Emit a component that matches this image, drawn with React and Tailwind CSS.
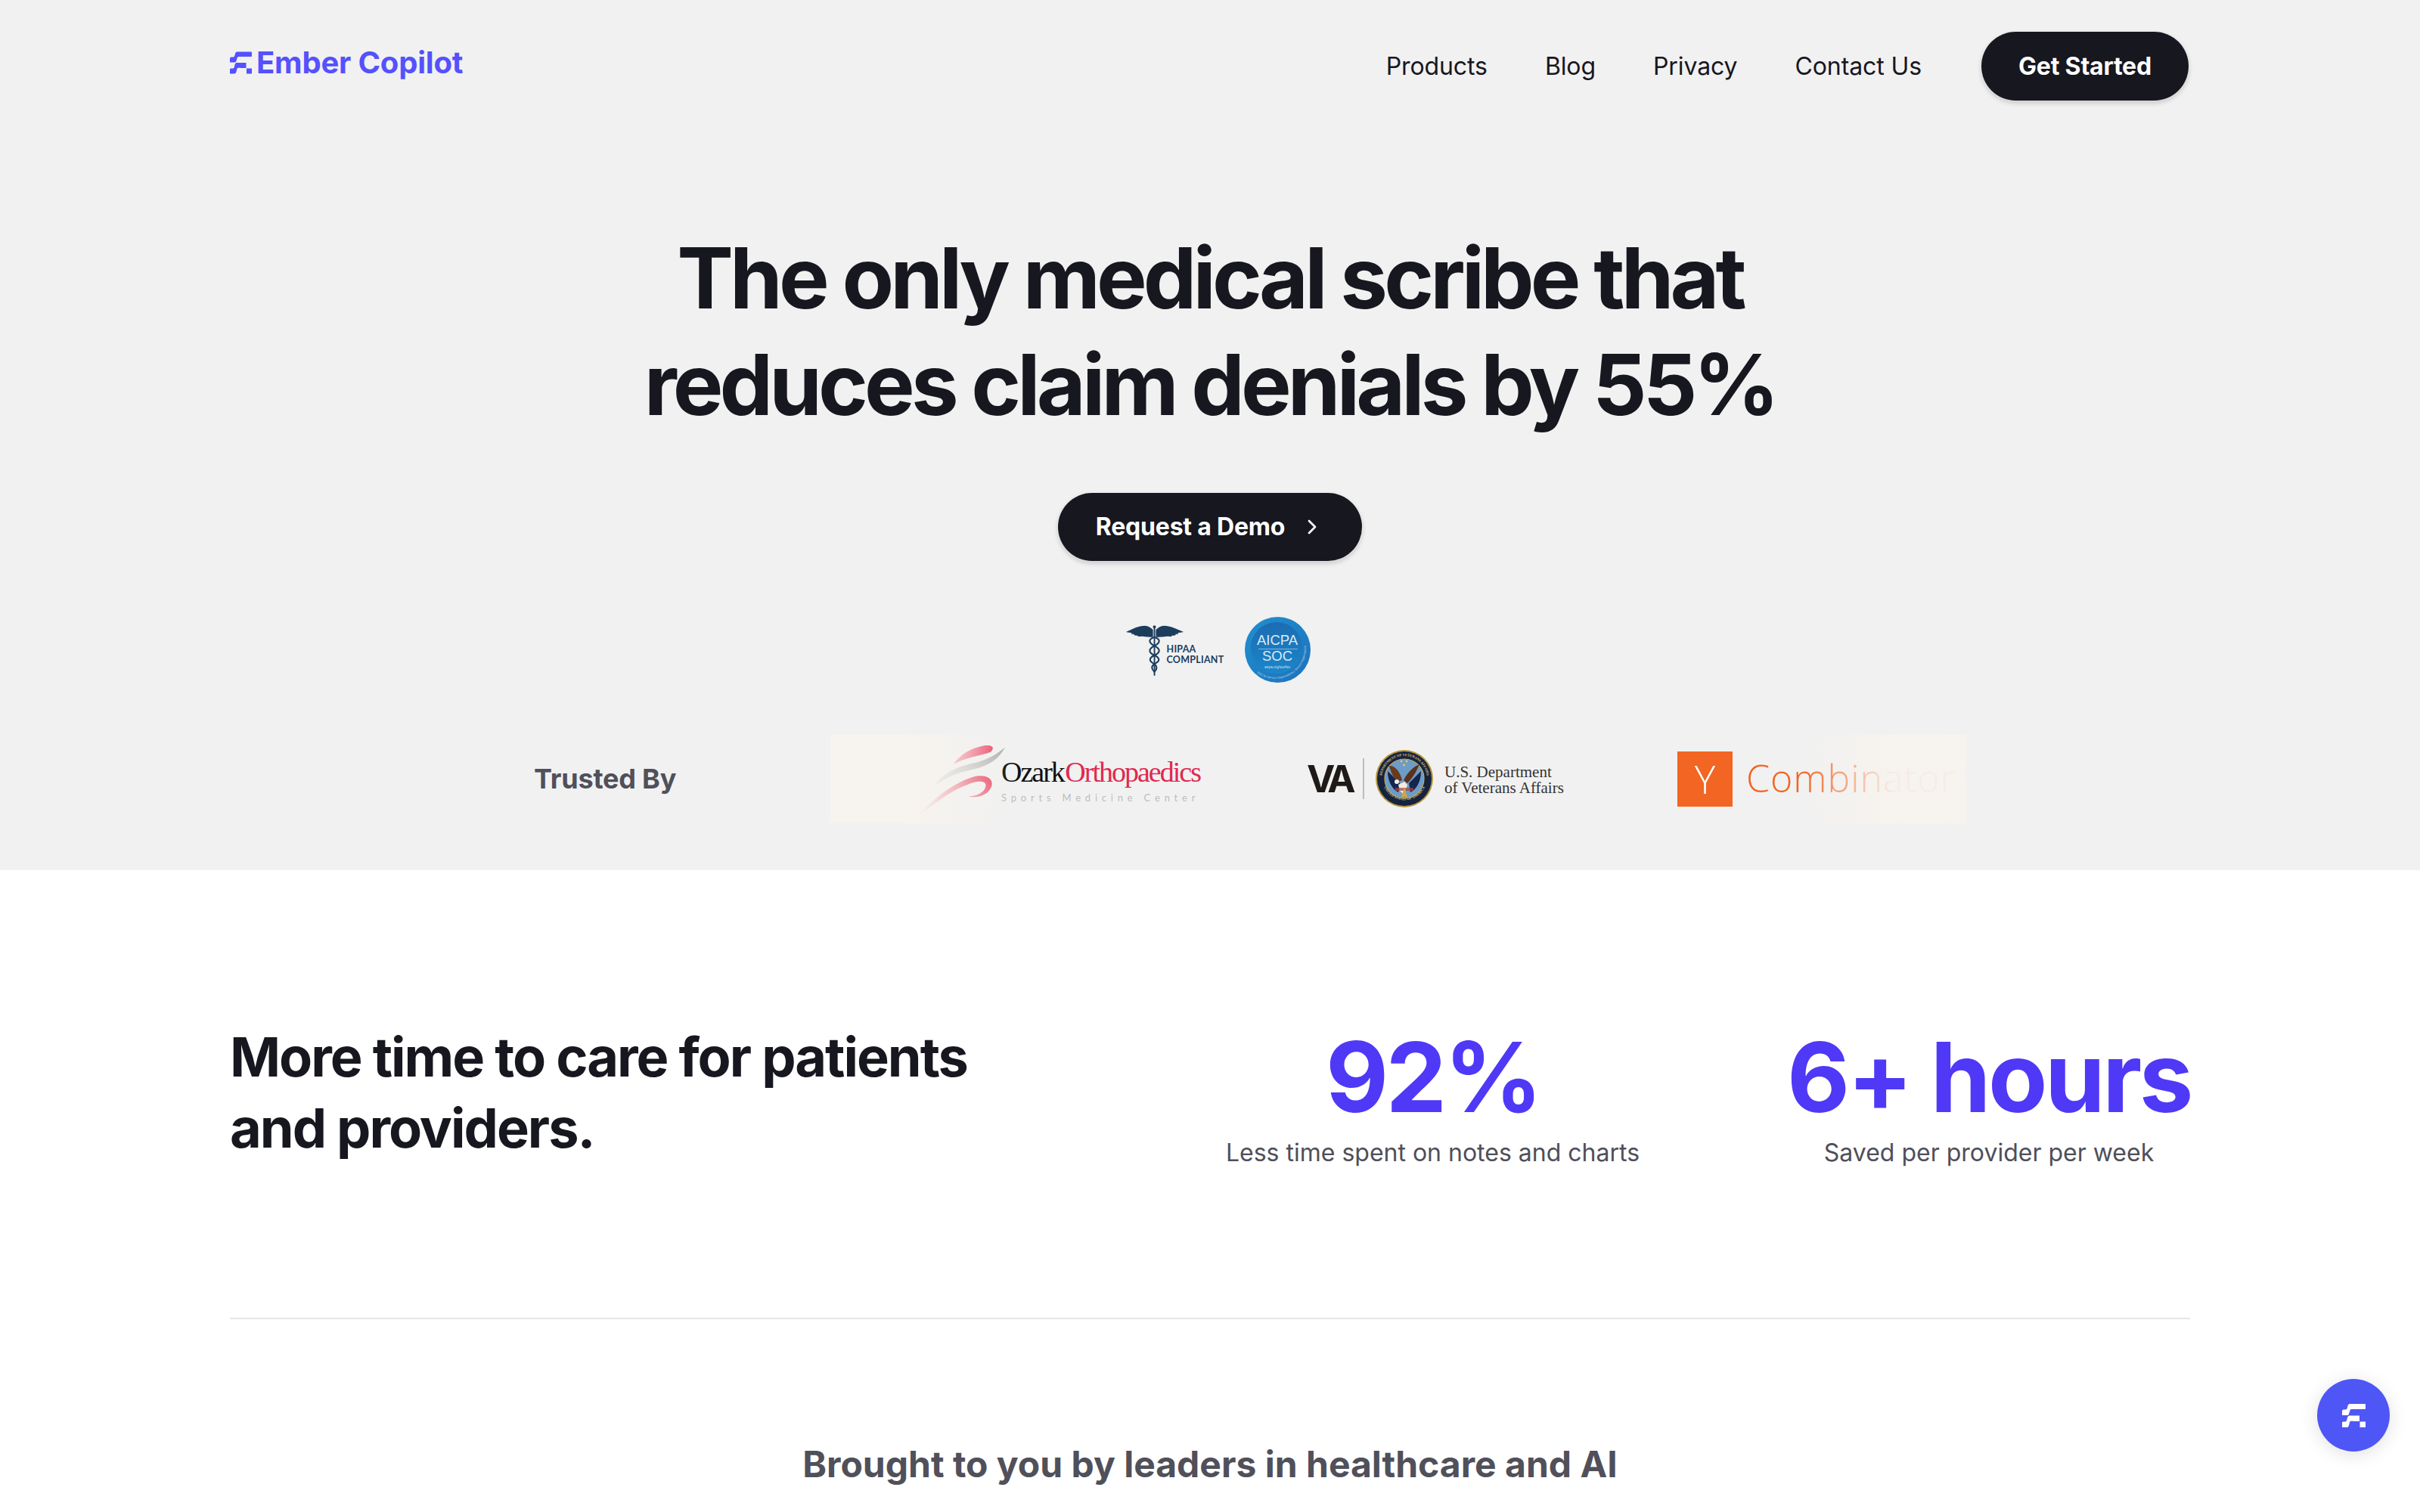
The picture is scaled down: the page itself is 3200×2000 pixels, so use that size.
import { ChevronRight } from "lucide-react";

const INTER = { fontFamily: "Inter, sans-serif" };

function EmberMark({ className }) {
  return (
    <svg viewBox="0 0 31 31" className={className} fill="currentColor">
      <path d="M10 0H30a1 1 0 0 1 1 1V6a1 1 0 0 1-1 1H12.500C11 7 10.500 8 9.800 10.500C9.300 13 8.500 15 7 15H0V9.800C0 8.500 .8 7.500 2 7.500H4.500C6 7.500 6.500 6.500 7 4.500C7.500 2 8.300 0 10 0Z" />
      <path d="M9.500 15.500H23V23H15V22.800H11.800C10.500 22.800 10 24 9.600 26C9 29 8.300 31 6.500 31H0V25C0 24 .8 23.500 1.800 23.500H4C5.500 23.500 6 22.500 6.400 20.500C7 17.500 7.800 15.500 9.500 15.500Z" />
      <rect x="23.500" y="23.500" width="7.500" height="7.500" />
    </svg>
  );
}

function NavBar() {
  return (
    <header className="flex items-center justify-between pt-[42px]">
      <a className="flex items-center gap-[6px] -mt-[10px] text-[#5551ff]">
        <EmberMark className="w-[29px] h-[30px]" />
        <span className="text-[40px] leading-[48px] font-bold tracking-[-0.2px]">Ember Copilot</span>
      </a>
      <nav className="flex items-center gap-[76px] mr-[2px] text-[32px] tracking-[-0.1px] text-[#17171f]">
        <a>Products</a>
        <a>Blog</a>
        <a>Privacy</a>
        <a className="mr-[3px]">Contact Us</a>
        <button className="h-[91px] w-[274px] rounded-full bg-[#17171f] text-white font-bold tracking-[-0.2px] shadow-[0_3px_6px_rgba(0,0,0,0.2),0_1px_0_1px_rgba(255,255,255,0.8)]">
          Get Started
        </button>
      </nav>
    </header>
  );
}

function Caduceus() {
  return (
    <svg viewBox="0 0 80 74" className="w-[80px] h-[74px] text-[#1c3d5c]" fill="currentColor">
      <path d="M37 9C30 1 22 3 13 6C8 8 4 10 0 12C4 13 6 13 8 13C6 15 8 15 11 15C10 17 13 17 16 17C16 19 20 18 23 18C28 19 33 19 37 19Z" />
      <path d="M41 9C48 1 56 3 65 6C70 8 75 10 79 12C75 13 73 13 71 13C73 15 71 15 68 15C69 17 66 17 63 17C63 19 59 18 56 18C51 19 46 19 41 19Z" />
      <circle cx="39" cy="5" r="2" />
      <rect x="38" y="6" width="2" height="66" />
      <path d="M39 19C48 22 47 27 39 31C31 35 30 40 39 44C47 48 47 52 39 56C34 59 35 63 39 67M39 19C30 22 31 27 39 31C47 35 48 40 39 44C31 48 31 52 39 56C43 59 43 63 39 67" fill="none" stroke="currentColor" strokeWidth="2.200" />
    </svg>
  );
}

function AicpaBadge() {
  return (
    <svg viewBox="0 0 87 87" className="w-[87px] h-[87px] shrink-0" fontFamily="Liberation Sans, sans-serif">
      <defs>
        <linearGradient id="aicpaRim" x1="0" x2="1" y1="0" y2="1">
          <stop offset="0" stopColor="#1f8fd0" />
          <stop offset="1" stopColor="#1f72bb" />
        </linearGradient>
        <linearGradient id="aicpaCore" x1="0" x2="0" y1="0" y2="1">
          <stop offset="0" stopColor="#1c6cb2" />
          <stop offset="1" stopColor="#1b86c9" />
        </linearGradient>
        <path id="aicpaRing" d="M16 74a41 41 0 0 0 65-36" />
      </defs>
      <circle cx="43.500" cy="43.500" r="43.500" fill="url(#aicpaRim)" />
      <circle cx="42" cy="41" r="34" fill="url(#aicpaCore)" />
      <text x="43" y="37" textAnchor="middle" fontSize="18.500" fill="#dbeaf6">AICPA</text>
      <rect x="18" y="42" width="52" height="1" fill="#7fb4dc" />
      <text x="43" y="58" textAnchor="middle" fontSize="18.500" fill="#dbeaf6">SOC</text>
      <text x="43" y="68" textAnchor="middle" fontSize="4.500" fill="#cfe3f3">aicpa.org/soc4so</text>
      <text fontSize="3.800" fill="#bcd9ef">
        <textPath href="#aicpaRing">SOC for Service Organizations | Service Organizations</textPath>
      </text>
    </svg>
  );
}

function Compliance() {
  return (
    <div className="flex items-center justify-center mt-[74px] ml-[26px]">
      <div className="flex items-start w-[130px] ml-[-5px] h-[74px]">
        <Caduceus />
        <div className="ml-[-23px] mt-[29px] text-[12.5px] leading-[14px] font-bold tracking-[0.25px] text-[#1c3d5c]" style={{ fontFamily: "Lato, sans-serif" }}>
          <div>HIPAA</div>
          <div>COMPLIANT</div>
        </div>
      </div>
      <div className="ml-[27px]">
        <AicpaBadge />
      </div>
    </div>
  );
}

function OzarkLogo() {
  return (
    <div className="flex items-start w-[512px] h-[118px] pl-[116px] shrink-0">
      <svg viewBox="0 0 108 90" className="w-[115px] h-[96px] mt-[12px] shrink-0">
        <defs>
          <linearGradient id="ozTop" x1="0" x2="1" y1="0" y2="0">
            <stop offset="0" stopColor="#f29bad" />
            <stop offset="1" stopColor="#e9415f" />
          </linearGradient>
          <linearGradient id="ozBottom" x1="0" x2="1" y1="1" y2="0">
            <stop offset="0" stopColor="#f4d6da" />
            <stop offset="1" stopColor="#e9415f" />
          </linearGradient>
          <linearGradient id="ozGray" x1="0" x2="1" y1="1" y2="0">
            <stop offset="0" stopColor="#dededc" />
            <stop offset="1" stopColor="#adadab" />
          </linearGradient>
        </defs>
        <path d="M44 26C52 14 66 6 82 3C92 2 96 5 90 11C78 16 60 17 44 26Z" fill="url(#ozTop)" />
        <path d="M20 54C30 36 52 28 72 24C86 20 96 15 108 5C100 20 88 28 66 33C46 37 32 44 20 54Z" fill="url(#ozGray)" />
        <path d="M0 90C18 70 42 50 68 42C86 37 96 46 90 56C86 64 74 69 62 66C74 66 84 60 84 52C84 46 72 46 60 52C38 60 18 78 0 90Z" fill="url(#ozBottom)" />
      </svg>
      <div className="ml-[-5px] pt-[29px]">
        <div className="text-[38px] leading-[42px] tracking-[-2px] whitespace-nowrap" style={{ fontFamily: "Liberation Serif, serif" }}>
          <span className="text-[#111111]">Ozark </span>
          <span className="text-[#e0294f] -ml-[6px]">Orthopaedics</span>
        </div>
        <div className="mt-[6px] text-[13px] leading-[14px] tracking-[5.800px] text-[#bdbdbd] whitespace-nowrap" style={{ fontFamily: "Lato, sans-serif" }}>
          Sports Medicine Center
        </div>
      </div>
    </div>
  );
}

function VaSeal() {
  return (
    <svg viewBox="0 0 76 76" className="w-[76px] h-[76px] shrink-0">
      <defs>
        <path id="sealTop" d="M8 38a30 30 0 0 1 60 0" />
        <path id="sealBottom" d="M9 44a30 30 0 0 0 58 0" />
      </defs>
      <circle cx="38" cy="38" r="38" fill="#b8963e" />
      <circle cx="38" cy="38" r="36" fill="#16233f" />
      <text fontSize="4.600" fill="#d9c27c" fontWeight="700" fontFamily="Liberation Serif, serif" textAnchor="middle">
        <textPath href="#sealTop" startOffset="50%">DEPARTMENT OF VETERANS AFFAIRS</textPath>
      </text>
      <text fontSize="4.600" fill="#d9c27c" fontWeight="700" fontFamily="Liberation Serif, serif" textAnchor="middle">
        <textPath href="#sealBottom" startOffset="50%">UNITED STATES OF AMERICA</textPath>
      </text>
      <circle cx="38" cy="38" r="26" fill="#6d9cc7" stroke="#c9a95b" strokeWidth="1.200" />
      <path d="M16 28L32 44L30 56C22 52 16 42 16 28Z" fill="#15264d" />
      <path d="M60 28L44 44L46 56C54 52 60 42 60 28Z" fill="#15264d" />
      <path d="M18 21C24 20 32 27 35 40L30 42C24 38 20 30 18 21Z" fill="#6b3a1f" />
      <path d="M58 19C54 28 50 36 42 44L37 40C42 30 50 22 58 19Z" fill="#5d3119" />
      <circle cx="28" cy="42" r="3" fill="#f0efe9" />
      <path d="M30 46L38 42L42 46L38 60L32 54Z" fill="#f2ece0" />
      <path d="M26 50H50V54H26Z" fill="#a8413a" opacity="0.7" />
      <path d="M38 50L42 62H34Z" fill="#d4a73c" />
      <circle cx="34" cy="15" r="1.400" fill="#e6c95a" />
      <circle cx="41" cy="15" r="1.400" fill="#e6c95a" />
      <circle cx="37.500" cy="20" r="1.400" fill="#e6c95a" />
    </svg>
  );
}

function VaLogo() {
  return (
    <div className="flex items-center w-[341px] ml-[118px] shrink-0">
      <span className="w-[60px] shrink-0 text-[50px] leading-none font-bold tracking-[-6px] text-[#1f1a17]">VA</span>
      <div className="w-[2px] shrink-0 h-[54px] bg-[#bdbdbd] ml-[14px] mr-[15px]" />
      <VaSeal />
      <div className="ml-[15px] pt-[3px] text-[21px] leading-[21px] text-[#333333] whitespace-nowrap" style={{ fontFamily: "Liberation Serif, serif" }}>
        <div>U.S. Department</div>
        <div>of Veterans Affairs</div>
      </div>
    </div>
  );
}

function YcLogo() {
  return (
    <div className="flex items-center ml-[149px] shrink-0">
      <div className="w-[73px] h-[73px] bg-[#f26522] flex items-center justify-center text-white text-[52px] leading-none" style={{ fontFamily: "Open Sans, sans-serif", fontWeight: 300 }}>
        Y
      </div>
      <span className="ml-[18px] -mt-[2px] text-[50px] leading-none tracking-[1px] text-[#f26522]" style={{ fontFamily: "Open Sans, sans-serif", fontWeight: 300 }}>
        Combinator
      </span>
    </div>
  );
}

function TrustedBy() {
  return (
    <div className="flex items-center mt-[68px] ml-[706px]">
      <div className="w-[392px] text-[36px] font-bold tracking-[-0.2px] text-[#50505a]">Trusted By</div>
      <div className="relative w-[1502px] h-[118px] flex items-center overflow-hidden">
        <OzarkLogo />
        <VaLogo />
        <YcLogo />
        <div className="absolute left-0 top-0 h-full w-[240px] bg-gradient-to-r from-[#f7f3ee] via-[#f7f3ee] via-40% to-[#f7f3ee]/0" />
        <div className="absolute right-0 top-0 h-full w-[220px] bg-gradient-to-l from-[#f7f3ee]/95 via-[#f7f3ee]/95 via-45% to-[#f7f3ee]/0" />
      </div>
    </div>
  );
}

function Hero() {
  return (
    <section className="bg-[#f1f1f1] h-[1151px]">
      <div className="w-[2592px] mx-auto">
        <NavBar />
      </div>
      <h1 className="mt-[164px] text-center text-[112px] leading-[141px] font-bold tracking-[-4.900px] text-[#17171f]">
        The only medical scribe that
        <br />
        reduces claim denials by 55%
      </h1>
      <div className="flex justify-center mt-[73px]">
        <button className="h-[90px] w-[402px] rounded-full bg-[#17171f] text-white text-[32px] font-bold tracking-[-0.2px] flex items-center justify-center gap-[20px] shadow-[0_3px_6px_rgba(0,0,0,0.2),0_1px_0_1px_rgba(255,255,255,0.8)]">
          Request a Demo
          <ChevronRight className="w-[32px] h-[32px]" strokeWidth={2} />
        </button>
      </div>
      <Compliance />
      <TrustedBy />
    </section>
  );
}

function Stat({ value, label, className }) {
  return (
    <div className={"flex flex-col items-center shrink-0 pt-[4px] " + className}>
      <div className="text-[128px] leading-[144px] font-bold tracking-[-3.500px] text-[#4f39f6] whitespace-nowrap">{value}</div>
      <div className="mt-[4px] text-[32px] leading-[48px] text-[#4f4f59] whitespace-nowrap">{label}</div>
    </div>
  );
}

function Stats() {
  return (
    <section className="w-[2592px] mx-auto">
      <div className="flex items-start pt-[198px] pb-[194px] border-b-2 border-[#e6e6e6]">
        <h2 className="w-[1317px] shrink-0 pt-[2px] text-[72px] leading-[94px] font-bold tracking-[-2px] text-[#17171f]">
          More time to care for patients
          <br />
          and providers.
        </h2>
        <Stat value="92%" label="Less time spent on notes and charts" className="w-[547px]" />
        <Stat value="6+ hours" label="Saved per provider per week" className="w-[532px] ml-[196px]" />
      </div>
      <h2 className="mt-[160px] text-center text-[48px] leading-[64px] font-bold text-[#50505a]">
        Brought to you by leaders in healthcare and AI
      </h2>
    </section>
  );
}

export default function App() {
  return (
    <div className="relative h-[2000px] overflow-hidden bg-white" style={INTER}>
      <Hero />
      <Stats />
      <button className="fixed right-[40px] bottom-[80px] w-[96px] h-[96px] rounded-full bg-[#4f56f6] text-white flex items-center justify-center shadow-[0_4px_24px_rgba(0,0,0,0.12)]">
        <EmberMark className="w-[31px] h-[31px]" />
      </button>
    </div>
  );
}
